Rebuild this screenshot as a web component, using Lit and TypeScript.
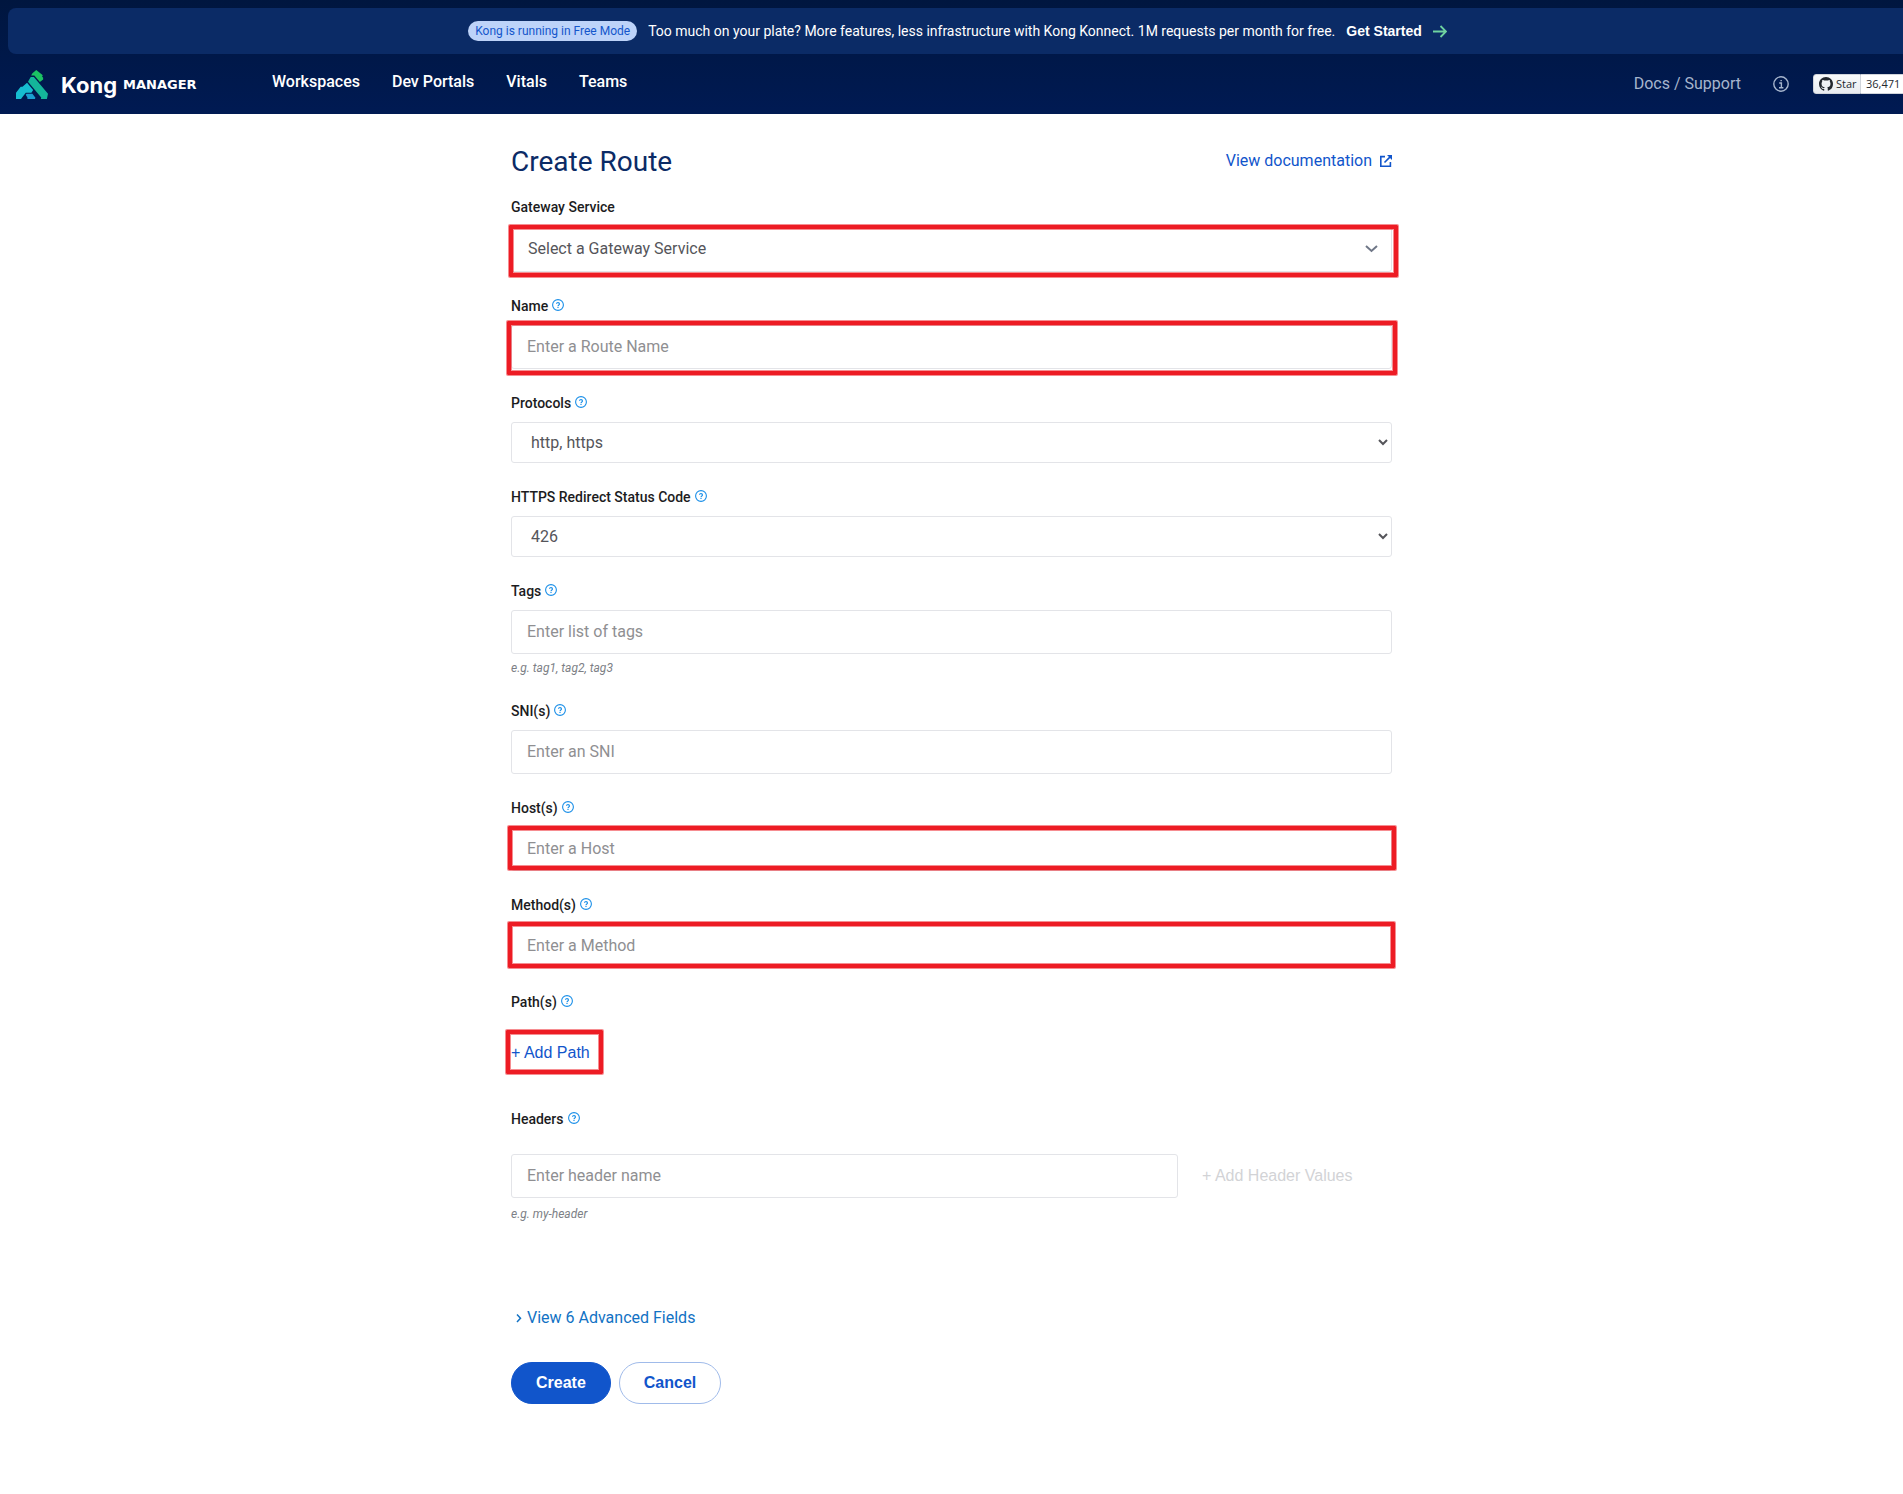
import { LitElement, html, css, svg, nothing } from "lit";
import { customElement, property } from "lit/decorators.js";

@customElement("help-icon")
class HelpIcon extends LitElement {
  static styles = css`
    :host { display: inline-flex; padding-bottom: 4px; }
    .icon { display: block; width: 12px; height: 12px; }
  `;
  render() {
    return html`<svg class="icon" viewBox="0 0 12 12" fill="none" stroke="#1a8fe8" aria-hidden="true">
      <circle cx="6" cy="6" r="5.4" stroke-width="1.1" />
      <path d="M4.5 4.8C4.5 3.2 7.5 3.2 7.5 4.9C7.5 6 6 5.9 6 7.2" stroke-width="1.1" />
      <path d="M6 8V9.1" stroke-width="1.2" />
    </svg>`;
  }
}

/* One labelled form row; the optional mark frames its control in red. */
@customElement("form-field")
class FormField extends LitElement {
  @property() label = "";
  @property() kind: "input" | "select" | "picker" = "input";
  @property() text = "";
  @property() hint = "";
  @property() mark = "";
  @property({ type: Boolean }) help = false;

  static styles = css`
    :host { display: block; }
    * { box-sizing: border-box; }
    .label-row { display: flex; align-items: center; gap: 4px; height: 21px; margin-bottom: 8px; }
    .label { font-size: 14px; font-weight: 500; line-height: 21px; color: #1c1c1e; }
    .control { position: relative; display: flex; }
    .input, .select, .picker {
      flex: 1; min-width: 0; width: 100%;
      border: 1px solid #e3e4e8; border-radius: 3px; background: #fff;
      font-family: inherit; font-size: 16px; font-weight: 400; color: #55555a;
    }
    .input { height: 44px; padding: 0 15px 2px; }
    .input::placeholder { color: #8f8f92; opacity: 1; }
    .select { height: 41px; padding: 0 0 0 15px; }
    .picker { height: 46px; padding: 0 40px 2px 16px; appearance: none; }
    .chevron { position: absolute; right: 14px; top: 16px; width: 13px; height: 13px; pointer-events: none; }
    .hint { margin: 5px 0 0; font-size: 12px; line-height: 18px; font-style: italic; color: #7d7f86; }
    .mark {
      position: absolute; pointer-events: none;
      border: 4px solid #ed1c24; border-radius: 1px;
      box-shadow: 0 0 0 1px rgba(237, 28, 36, 0.5), inset 0 0 0 1px rgba(237, 28, 36, 0.5);
    }
    .mark-service { inset: -1px -6px -5px -2px; }
    .mark-name { inset: -4px -5px -6px -4px; }
    .mark-host { inset: -1px -4px 1px -3px; }
    .mark-method { inset: -2px -3px 0 -3px; }
  `;

  private control() {
    if (this.kind === "select") {
      return html`<select class="select" id="c"><option>${this.text}</option></select>`;
    }
    if (this.kind === "picker") {
      return html`<select class="picker" id="c"><option>${this.text}</option></select>
        <svg class="chevron" viewBox="0 0 13 13" fill="none" stroke="#6f7787" stroke-width="2" aria-hidden="true">
          <path d="M1 4L6.5 9L12 4" />
        </svg>`;
    }
    return html`<input class="input" id="c" type="text" placeholder=${this.text} />`;
  }

  render() {
    return html`
      <div class="label-row">
        <label class="label" for="c">${this.label}</label>
        ${this.help ? html`<help-icon></help-icon>` : nothing}
      </div>
      <div class="control">
        ${this.control()}
        ${this.mark ? html`<span class="mark mark-${this.mark}"></span>` : nothing}
      </div>
      ${this.hint ? html`<p class="hint">${this.hint}</p>` : nothing}
    `;
  }
}

const kongMark = svg`
  <path fill="#1a9fd0" d="M7.88 18.96h4.405l2.286 2.876-.393.979h-5.69l.139-.979-1.341-2.117z" />
  <path fill="#14b59a" d="M11.032 6.328l2.36-.004L24 18.97l-.824 3.845h-4.547l.283-1.083L9 9.912z" />
  <path fill="#1bc263" d="M15.2 1.184l4.932 3.876-.632.651.855 1.191v1.273l-2.458 2.004-4.135-4.884h-2.407l.969-1.777z" />
  <path fill="#16bdd0" d="M4.852 13.597l3.44-2.989 4.565 5.494-1.296 2.012h-4.21l-2.912 3.822-.665.879H0v-4.689l3.517-4.529z" />`;

@customElement("top-bar")
class TopBar extends LitElement {
  static styles = css`
    :host { display: block; background: linear-gradient(#00163f, #001a53); color: #fff; }
    * { box-sizing: border-box; }
    a { color: inherit; text-decoration: none; }
    .wrap { padding: 8px 0 0 8px; overflow: hidden; }
    .banner {
      display: flex; align-items: center; justify-content: center; gap: 11px;
      height: 46px; padding-left: 4px; border-radius: 8px 0 0 8px;
      background: #0b2b66; font-size: 14px; line-height: 20px;
    }
    .badge { height: 20px; padding: 0 7px; border-radius: 10px; background: #bdd3f9; color: #1456cb; font-size: 12px; line-height: 20px; }
    .start { display: flex; align-items: center; gap: 11px; font-family: "Liberation Sans", sans-serif; font-weight: 700; }
    .arrow { width: 14px; height: 14px; }
    .bar { display: flex; align-items: center; height: 60px; padding-left: 8px; }
    .brand { display: flex; align-items: center; width: 256px; }
    .logo { width: 32px; height: 29px; margin-right: 13px; }
    .word { display: flex; align-items: center; gap: 6px; padding-top: 2px; }
    .kong { font-family: Inter, sans-serif; font-size: 22px; line-height: 28px; font-weight: 700; }
    .manager { font-family: "DejaVu Sans", sans-serif; font-size: 13px; line-height: 28px; font-weight: 700; }
    .nav { display: flex; gap: 32px; flex: 1; padding-bottom: 4px; font-size: 16px; line-height: 24px; font-weight: 500; }
    .docs { font-size: 16px; line-height: 24px; color: #a6b5cd; margin-right: 32px; }
    .info { width: 16px; height: 16px; margin-right: 24px; }
    .github { display: flex; height: 20px; font-family: "Open Sans", sans-serif; font-size: 11px; line-height: 18px; color: #24292f; }
    .star { display: flex; align-items: center; gap: 3px; width: 48px; padding-left: 5px; border: 1px solid #d0d4da; border-radius: 3px 0 0 3px; background: linear-gradient(#f8fafb, #e9ecf0); }
    .mark { width: 14px; height: 14px; }
    .count { width: 42px; padding-left: 5px; border: 1px solid #d0d4da; border-width: 1px 0; background: #fff; }
  `;
  render() {
    return html`
      <header class="wrap">
        <div class="banner">
          <span class="badge">Kong is running in Free Mode</span>
          <span>Too much on your plate? More features, less infrastructure with Kong Konnect. 1M requests per month for free.</span>
          <a class="start" href="#">Get Started
            <svg class="arrow" viewBox="0 0 14 14" fill="none" stroke="#6fd3a0" stroke-width="1.8" aria-hidden="true">
              <path d="M0 7.5H12.5M7.5 2L13 7.5L7.5 13" />
            </svg>
          </a>
        </div>
        <div class="bar">
          <a class="brand" href="#">
            <svg class="logo" viewBox="0 1.1 24 21.75" aria-hidden="true">${kongMark}</svg>
            <span class="word"><span class="kong">Kong</span><span class="manager">MANAGER</span></span>
          </a>
          <nav class="nav">
            ${["Workspaces", "Dev Portals", "Vitals", "Teams"].map((n) => html`<a href="#">${n}</a>`)}
          </nav>
          <a class="docs" href="#">Docs / Support</a>
          <svg class="info" viewBox="0 0 16 16" fill="none" stroke="#a6b5cd" aria-hidden="true">
            <circle cx="8" cy="8" r="7.2" stroke-width="1.4" />
            <path d="M6.2 7H8.4V11.6M6 11.7H10.4M7.4 4.6H8.9" stroke-width="1.4" />
          </svg>
          <div class="github">
            <a class="star" href="#">
              <svg class="mark" viewBox="0 0 16 16" fill="#24292f" aria-hidden="true">
                <path d="M8 0C3.58 0 0 3.58 0 8c0 3.54 2.29 6.53 5.47 7.59.4.07.55-.17.55-.38 0-.19-.01-.82-.01-1.49-2.01.37-2.53-.49-2.69-.94-.09-.23-.48-.94-.82-1.13-.28-.15-.68-.52-.01-.53.63-.01 1.08.58 1.23.82.72 1.21 1.87.87 2.33.66.07-.52.28-.87.51-1.07-1.78-.2-3.64-.89-3.64-3.95 0-.87.31-1.59.82-2.15-.08-.2-.36-1.02.08-2.12 0 0 .67-.21 2.2.82.64-.18 1.32-.27 2-.27s1.36.09 2 .27c1.53-1.04 2.2-.82 2.2-.82.44 1.1.16 1.92.08 2.12.51.56.82 1.27.82 2.15 0 3.07-1.87 3.75-3.65 3.95.29.25.54.73.54 1.48 0 1.07-.01 1.93-.01 2.2 0 .21.15.46.55.38A8.01 8.01 0 0 0 16 8c0-4.42-3.58-8-8-8z" />
              </svg>Star</a>
            <a class="count" href="#">36,471</a>
          </div>
        </div>
      </header>
    `;
  }
}

@customElement("app-root")
class AppRoot extends LitElement {
  static styles = css`
    :host { display: block; min-height: 100vh; background: #fff; font-family: Roboto, sans-serif; color: #1c1c1e; }
    * { box-sizing: border-box; }
    a { text-decoration: none; }
    button { font-family: "Liberation Sans", sans-serif; font-size: 16px; cursor: pointer; }
    .page { max-width: 881px; margin: 0 auto; padding: 28px 0 88px; }
    .head { display: flex; justify-content: space-between; align-items: center; margin-bottom: 15px; }
    .title { margin: 0; font-size: 28px; line-height: 40px; font-weight: 400; color: #0b2b66; }
    .doc { display: flex; align-items: center; gap: 8px; padding-bottom: 2px; font-size: 16px; line-height: 24px; color: #1155cb; }
    .ext { width: 12px; height: 12px; }
    .form { display: flex; flex-direction: column; gap: 24px; }
    .group-label { display: flex; align-items: center; gap: 4px; font-size: 14px; line-height: 21px; font-weight: 500; }
    .paths { display: flex; padding: 18px 0 10px; }
    .add-wrap { position: relative; }
    .link { height: 44px; padding: 0; border: 0; background: none; color: #1155cb; }
    .link:disabled { color: #d2d3d6; cursor: default; }
    .mark {
      position: absolute; inset: -1px -13px 1px -5px; pointer-events: none;
      border: 4px solid #ed1c24; border-radius: 1px;
      box-shadow: 0 0 0 1px rgba(237, 28, 36, 0.5), inset 0 0 0 1px rgba(237, 28, 36, 0.5);
    }
    .headers { display: grid; grid-template-columns: 667fr 190fr; column-gap: 24px; padding-top: 24px; }
    .input { height: 44px; min-width: 0; padding: 0 15px 2px; border: 1px solid #e3e4e8; border-radius: 3px; font-family: inherit; font-size: 16px; }
    .input::placeholder { color: #8f8f92; opacity: 1; }
    .headers .link { justify-self: start; }
    .hint { margin: 7px 0 0; font-size: 12px; line-height: 18px; font-style: italic; color: #7d7f86; }
    .advanced {
      display: flex; align-items: center; gap: 4px; margin: 83px 0 0 4px; padding: 0; border: 0; background: none;
      font-family: inherit; line-height: 24px; color: #1272c4;
    }
    .caret { width: 8px; height: 10px; }
    .actions { display: flex; gap: 8px; margin-top: 32px; }
    .btn { height: 42px; padding: 0 24px; border: 1px solid #1155cb; border-radius: 21px; font-weight: 700; }
    .primary { background: #1155cb; color: #fff; }
    .outline { background: #fff; border-color: #a0bbea; color: #1155cb; }
  `;
  render() {
    return html`
      <top-bar></top-bar>
      <main class="page">
        <div class="head">
          <h1 class="title">Create Route</h1>
          <a class="doc" href="#">View documentation
            <svg class="ext" viewBox="0 0 12 12" fill="none" stroke="#1155cb" stroke-width="1.6" aria-hidden="true">
              <path d="M5 1.6H.8V11.2H10.4V7M4.5 7.5L10.6 1.4" />
              <path d="M7 0H12V5Z" fill="#1155cb" stroke="none" />
            </svg>
          </a>
        </div>
        <form class="form" @submit=${(e: Event) => e.preventDefault()}>
          <form-field label="Gateway Service" kind="picker" text="Select a Gateway Service" mark="service"></form-field>
          <form-field label="Name" help text="Enter a Route Name" mark="name"></form-field>
          <form-field label="Protocols" help kind="select" text="http, https"></form-field>
          <form-field label="HTTPS Redirect Status Code" help kind="select" text="426"></form-field>
          <form-field label="Tags" help text="Enter list of tags" hint="e.g. tag1, tag2, tag3"></form-field>
          <form-field label="SNI(s)" help text="Enter an SNI"></form-field>
          <form-field label="Host(s)" help text="Enter a Host" mark="host"></form-field>
          <form-field label="Method(s)" help text="Enter a Method" mark="method"></form-field>
          <div>
            <div class="group-label">Path(s) <help-icon></help-icon></div>
            <div class="paths">
              <div class="add-wrap">
                <button class="link" type="button">+ Add Path</button>
                <span class="mark"></span>
              </div>
            </div>
          </div>
          <div>
            <label class="group-label" for="header-name">Headers <help-icon></help-icon></label>
            <div class="headers">
              <input class="input" id="header-name" type="text" placeholder="Enter header name" />
              <button class="link" type="button" disabled>+ Add Header Values</button>
            </div>
            <p class="hint">e.g. my-header</p>
            <button class="advanced" type="button">
              <svg class="caret" viewBox="0 0 8 10" fill="none" stroke="#1272c4" stroke-width="1.5" aria-hidden="true">
                <path d="M2 1.5L5.5 5.2L2 9" />
              </svg>View 6 Advanced Fields</button>
            <div class="actions">
              <button class="btn primary" type="submit">Create</button>
              <button class="btn outline" type="button">Cancel</button>
            </div>
          </div>
        </form>
      </main>
    `;
  }
}
